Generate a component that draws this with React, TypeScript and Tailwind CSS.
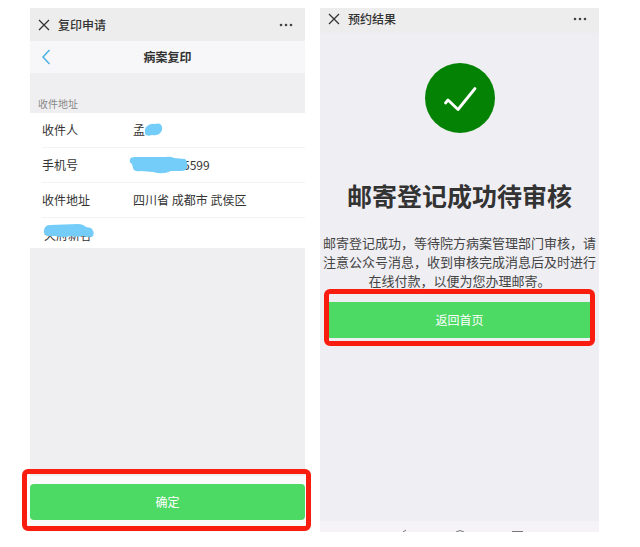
import { PropsWithChildren, ReactNode } from 'react';

const CloseIcon = () => (
  <svg className="size-3" viewBox="0 0 12 12" fill="none" stroke="#333" strokeWidth="1.3">
    <path d="M1 1l10 10M11 1L1 11" />
  </svg>
);

const TitleBar = ({ title, className }: { title: string; className: string }) => {
  return (
    <header className={`flex items-center bg-[#ededed] pr-3 pl-2 ${className}`}>
      <button type="button" aria-label="关闭">
        <CloseIcon />
      </button>
      <h2 className="ml-2 flex-1 text-xs font-medium text-[#333]">{title}</h2>
      <button type="button" aria-label="更多">
        <svg className="h-1 w-3.5" viewBox="0 0 14 4" fill="#444">
          <circle cx="2" cy="2" r="1.3" />
          <circle cx="7" cy="2" r="1.3" />
          <circle cx="12" cy="2" r="1.3" />
        </svg>
      </button>
    </header>
  );
};

const Field = ({
  id,
  label,
  value,
  inputClass = '',
  children,
}: {
  id: string;
  label: string;
  value: string;
  inputClass?: string;
  children?: ReactNode;
}) => {
  return (
    <div className="relative ml-3 flex h-[35px] items-center border-b border-[#f3f3f6]">
      <label htmlFor={id} className="w-[91px] shrink-0">
        {label}
      </label>
      <input
        id={id}
        defaultValue={value}
        className={`min-w-0 flex-1 bg-transparent outline-none ${inputClass}`}
      />
      {children}
    </div>
  );
};

const Marked = ({ children, className }: PropsWithChildren<{ className: string }>) => (
  <div className="relative">
    {children}
    <div
      className={`pointer-events-none absolute rounded-md border-[5px] border-[#f91d10] ${className}`}
    />
  </div>
);

const CopyRequest = () => {
  return (
    <section className="flex flex-col bg-[#efeff1]">
      <TitleBar title="复印申请" className="h-[33px]" />
      <nav className="grid h-8 grid-cols-3 items-center bg-[#f7f7f9] px-3">
        <button type="button" aria-label="返回">
          <svg className="h-4 w-2" viewBox="0 0 8 16" fill="none" stroke="#45afdf" strokeWidth="1.4">
            <path d="M7.5 1L1 8l6.5 7" />
          </svg>
        </button>
        <h1 className="text-center text-xs font-bold">病案复印</h1>
      </nav>
      <h3 className="flex h-10 items-end px-2 pb-0.5 text-[10px] text-[#888]">
        收件地址
      </h3>
      <form className="flex flex-1 flex-col text-xs">
        <div className="bg-white">
          <Field id="name" label="收件人" value="孟">
            <svg className="absolute left-[102px] h-4 w-5" viewBox="0 0 20 16" fill="#74cdf8">
              <path d="M2 5Q6 1 11 2Q17 0 18 5Q19 9 15 12Q12 14 8 13Q3 15 1 12Q0 8 2 5z" />
            </svg>
          </Field>
          <Field id="phone" label="手机号" value="5599" inputClass="pl-[50px]">
            <svg className="absolute left-[87px] h-5 w-[60px]" viewBox="0 0 60 20" fill="#74cdf8">
              <path d="M1 4Q2 2 6 2L36 2Q42 1 45 3L56 4Q59 6 58 13Q57 16 52 16L42 16Q34 20 24 17L12 16Q5 17 4 13L3 9Q0 8 1 4z" />
            </svg>
          </Field>
          <Field id="region" label="收件地址" value="四川省 成都市 武侯区" />
          <div className="relative ml-3 flex h-[30px] items-center pt-1">
            <input
              aria-label="详细地址"
              defaultValue="天府新谷"
              className="h-4 min-w-0 flex-1 pl-0.5 outline-none"
            />
            <svg className="absolute top-1.5 left-px h-4 w-[52px]" viewBox="0 0 52 16" fill="#74cdf8">
              <path d="M1 6Q2 1 7 1L35 0Q40 0 43 3L48 4Q52 8 50 12Q44 14 40 12Q34 13 28 12Q20 14 12 12L4 12Q0 10 1 6z" />
            </svg>
          </div>
        </div>
        <div className="mt-auto bg-[#fafafb] pt-2 pb-3">
          <Marked className="-top-[15px] -right-1.5 -bottom-[11px] -left-2">
            <button
              type="submit"
              className="block h-9 w-full rounded-sm bg-[#4cd964] text-white"
            >
              确定
            </button>
          </Marked>
        </div>
      </form>
    </section>
  );
};

const Result = () => {
  return (
    <section className="flex flex-col bg-[#efeef3]">
      <TitleBar title="预约结果" className="h-[25px] pb-1" />
      <div className="flex flex-1 flex-col items-center pt-[30px]">
        <svg className="size-[70px]" viewBox="0 0 70 70" fill="none">
          <circle cx="35" cy="35" r="35" fill="#048204" />
          <path
            d="M20.5 40L23 37L33 46.5L50 25.5"
            stroke="#fff"
            strokeWidth="2.8"
            strokeLinecap="round"
            strokeLinejoin="round"
          />
        </svg>
        <h1 className="mt-[42px] text-[25px] leading-10 font-bold">邮寄登记成功待审核</h1>
        <p className="mt-[18px] px-0.5 text-center text-[13px] leading-[19px] text-[#444]">
          邮寄登记成功，等待院方病案管理部门审核，请注意公众号消息，收到审核完成消息后及时进行在线付款，以便为您办理邮寄。
        </p>
        <div className="mt-3 w-full px-2">
          <Marked className="-inset-x-1 -top-[13px] -bottom-2">
            <button type="button" className="block h-9 w-full bg-[#4cd964] text-xs text-white">
              返回首页
            </button>
          </Marked>
        </div>
      </div>
      <footer className="h-[11px] bg-[#f5f3f8]">
        <svg className="mx-auto h-[11px] w-[130px]" viewBox="0 0 130 11" fill="none" stroke="#777">
          <path d="M8 11l3-2" />
          <path d="M61 11q4-3 8 0" />
          <path d="M117 10.5h11" />
        </svg>
      </footer>
    </section>
  );
};

const App = () => {
  return (
    <main
      lang="zh-CN"
      className="grid min-h-screen grid-cols-[minmax(0,275fr)_minmax(0,279fr)] gap-[15px] bg-white pt-2 pr-[41px] pb-[15px] pl-[30px] font-['Noto_Sans_CJK_SC',sans-serif] text-[#333]"
    >
      <CopyRequest />
      <Result />
    </main>
  );
};

export default App;
